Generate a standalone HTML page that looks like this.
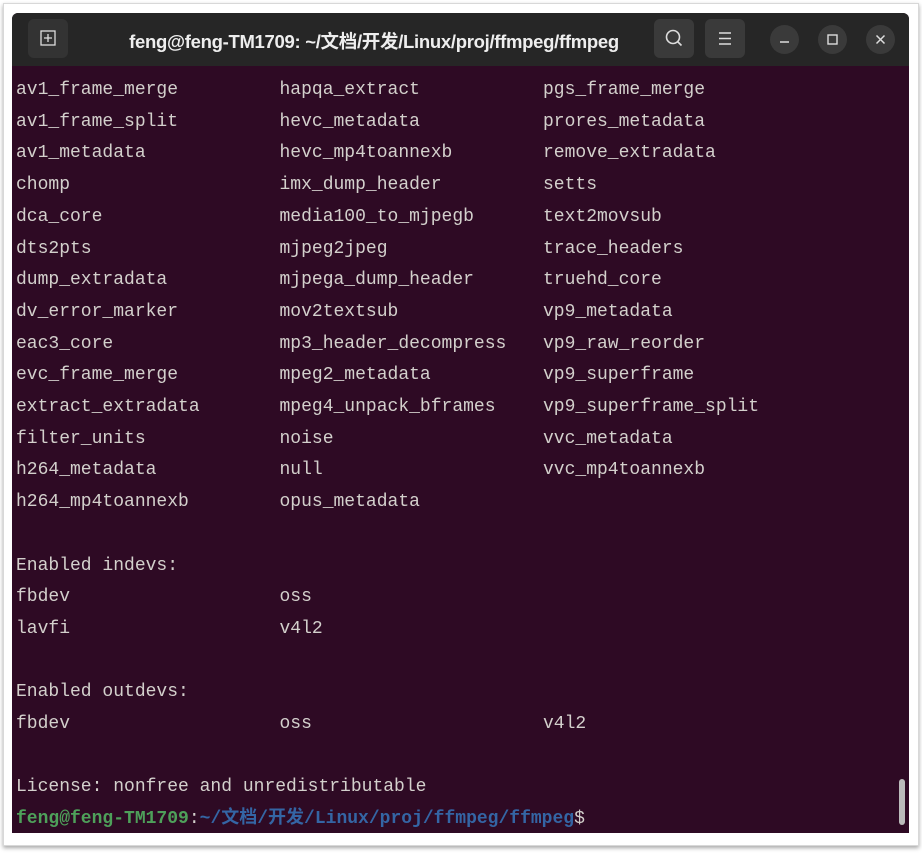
<!DOCTYPE html>
<html><head><meta charset="utf-8"><style>
html,body{margin:0;padding:0;background:#fff;width:922px;height:854px;overflow:hidden}
.outer{position:absolute;left:3px;top:3px;width:914px;height:841px;border:1px solid #d8d8d8;box-shadow:0 2px 4px rgba(0,0,0,.35);background:#fff}
.win{position:absolute;left:12px;top:13px;width:897px;height:820px;background:#2e0a24;overflow:hidden;border-radius:6px 6px 0 0}
.tb{position:absolute;left:0;top:0;width:897px;height:53px;background:#262626}
.title{position:absolute;left:0;width:724px;top:15px;text-align:center;color:#eee;font:bold 18.5px "Liberation Sans","Noto Sans CJK SC",sans-serif;letter-spacing:-0.3px}
.btn{position:absolute;top:6px;width:40px;height:39px;background:#3a3a3a;border-radius:6px}
.circ{position:absolute;top:12px;width:29px;height:29px;border-radius:50%;background:#3a3a3a}
.term{position:absolute;left:4px;top:62px;font:18px/31.7px "Liberation Mono","Noto Sans CJK SC",monospace;color:#d3d0cc;white-space:pre}
.c{display:inline-block;width:263.5px}
.g{color:#4ea05a;font-weight:bold}.b{color:#3465a4;font-weight:bold}
.sb{position:absolute;right:4px;top:766px;width:6px;height:46px;background:#bbb;border-radius:3px}
</style></head><body>
<div class="outer"></div>
<div class="win">
<div class="tb">
<div class="btn" style="left:16px;background:#333"><svg width="40" height="39"><rect x="13" y="12" width="14" height="14" fill="none" stroke="#ddd" stroke-width="1.3"/><path d="M20 15v8M16 19h8" stroke="#ddd" stroke-width="1.3"/></svg></div>
<div class="title">feng@feng-TM1709: ~/文档/开发/Linux/proj/ffmpeg/ffmpeg</div>
<div class="btn" style="left:642px"><svg width="40" height="39"><circle cx="19" cy="18" r="6.5" fill="none" stroke="#ddd" stroke-width="1.6"/><path d="M23.5 22.5l4 4" stroke="#ddd" stroke-width="1.6"/></svg></div>
<div class="btn" style="left:693px"><svg width="40" height="39"><path d="M14 14h12M14 19.5h12M14 25h12" stroke="#ddd" stroke-width="1.4"/></svg></div>
<div class="circ" style="left:758px"><svg width="29" height="29"><path d="M10 17h9" stroke="#ddd" stroke-width="1.4"/></svg></div>
<div class="circ" style="left:806px"><svg width="29" height="29"><rect x="10" y="10" width="9" height="9" fill="none" stroke="#ddd" stroke-width="1.4"/></svg></div>
<div class="circ" style="left:854px"><svg width="29" height="29"><path d="M10.5 10.5l8 8M18.5 10.5l-8 8" stroke="#ddd" stroke-width="1.5"/></svg></div>
</div>
<div class="term"><span class="c">av1_frame_merge</span><span class="c">hapqa_extract</span>pgs_frame_merge
<span class="c">av1_frame_split</span><span class="c">hevc_metadata</span>prores_metadata
<span class="c">av1_metadata</span><span class="c">hevc_mp4toannexb</span>remove_extradata
<span class="c">chomp</span><span class="c">imx_dump_header</span>setts
<span class="c">dca_core</span><span class="c">media100_to_mjpegb</span>text2movsub
<span class="c">dts2pts</span><span class="c">mjpeg2jpeg</span>trace_headers
<span class="c">dump_extradata</span><span class="c">mjpega_dump_header</span>truehd_core
<span class="c">dv_error_marker</span><span class="c">mov2textsub</span>vp9_metadata
<span class="c">eac3_core</span><span class="c">mp3_header_decompress</span>vp9_raw_reorder
<span class="c">evc_frame_merge</span><span class="c">mpeg2_metadata</span>vp9_superframe
<span class="c">extract_extradata</span><span class="c">mpeg4_unpack_bframes</span>vp9_superframe_split
<span class="c">filter_units</span><span class="c">noise</span>vvc_metadata
<span class="c">h264_metadata</span><span class="c">null</span>vvc_mp4toannexb
<span class="c">h264_mp4toannexb</span><span class="c">opus_metadata</span>

Enabled indevs:
<span class="c">fbdev</span><span class="c">oss</span>
<span class="c">lavfi</span><span class="c">v4l2</span>

Enabled outdevs:
<span class="c">fbdev</span><span class="c">oss</span>v4l2

License: nonfree and unredistributable
<span class="g">feng@feng-TM1709</span>:<span class="b">~/文档/开发/Linux/proj/ffmpeg/ffmpeg</span>$</div>
<div class="sb"></div>
</div>
</body></html>
